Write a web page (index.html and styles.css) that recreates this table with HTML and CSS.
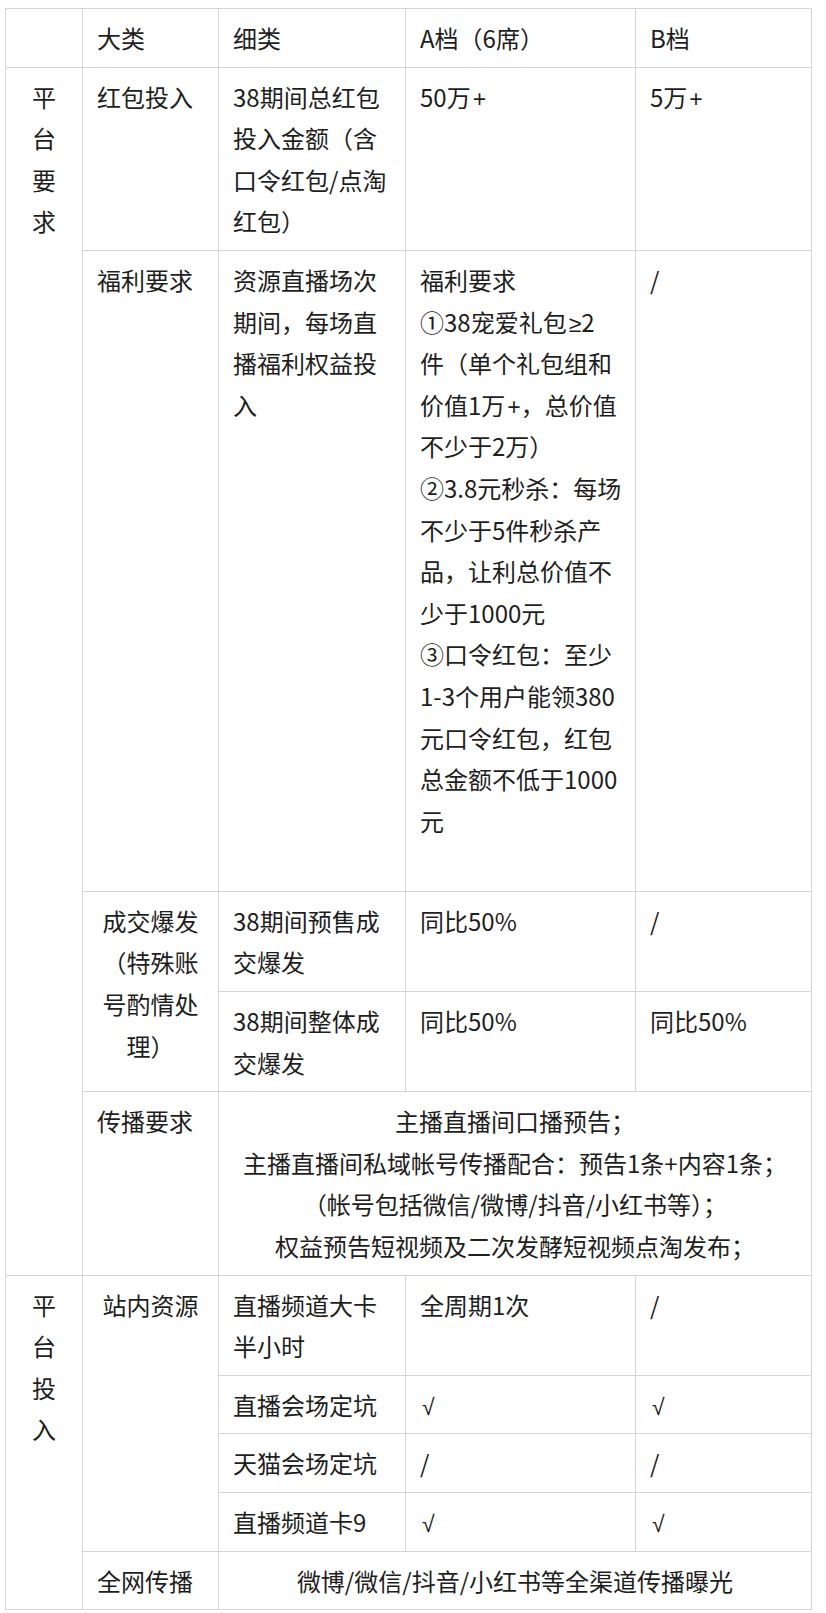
FILE: index.html
```html
<!DOCTYPE html>
<html lang="zh-CN">
<head>
<meta charset="utf-8">
<title>38 资源档位</title>
<link rel="stylesheet" href="styles.css">
</head>
<body>
<div class="page">
<table class="plan">
  <colgroup>
    <col class="c1"><col class="c2"><col class="c3"><col class="c4"><col class="c5">
  </colgroup>
  <tbody>
    <tr>
      <td></td>
      <td>大类</td>
      <td>细类</td>
      <td>A档（6席）</td>
      <td>B档</td>
    </tr>
    <tr>
      <td rowspan="5" class="vert">平<br>台<br>要<br>求</td>
      <td>红包投入</td>
      <td>38期间总红包投入金额（含口令红包/点淘红包）</td>
      <td>50万<span class="sym">+</span></td>
      <td>5万<span class="sym">+</span></td>
    </tr>
    <tr>
      <td>福利要求</td>
      <td>资源直播场次期间，每场直播福利权益投入</td>
      <td class="wide">福利要求<br>①38宠爱礼包<span class="sym">≥</span>2<br>件（单个礼包组和<br>价值1万<span class="sym">+</span>，总价值<br>不少于2万）<br>②3.8元秒杀：每场<br>不少于5件秒杀产<br>品，让利总价值不<br>少于1000元<br>③口令红包：至少<br>1-3个用户能领380<br>元口令红包，红包<br>总金额不低于1000<br>元<br>&nbsp;</td>
      <td>/</td>
    </tr>
    <tr>
      <td rowspan="2" class="center">成交爆发（特殊账号酌情处理）</td>
      <td>38期间预售成交爆发</td>
      <td>同比50%</td>
      <td>/</td>
    </tr>
    <tr>
      <td>38期间整体成交爆发</td>
      <td>同比50%</td>
      <td>同比50%</td>
    </tr>
    <tr>
      <td>传播要求</td>
      <td colspan="3" class="center">主播直播间口播预告；<br>主播直播间私域帐号传播配合：预告1条+内容1条；<br>（帐号包括微信/微博/抖音/小红书等）；<br>权益预告短视频及二次发酵短视频点淘发布；</td>
    </tr>
    <tr>
      <td rowspan="5" class="vert">平<br>台<br>投<br>入</td>
      <td rowspan="4" class="center">站内资源</td>
      <td>直播频道大卡半小时</td>
      <td>全周期1次</td>
      <td>/</td>
    </tr>
    <tr>
      <td>直播会场定坑</td>
      <td><span class="sym">√</span></td>
      <td><span class="sym">√</span></td>
    </tr>
    <tr>
      <td>天猫会场定坑</td>
      <td>/</td>
      <td>/</td>
    </tr>
    <tr>
      <td>直播频道卡9</td>
      <td><span class="sym">√</span></td>
      <td><span class="sym">√</span></td>
    </tr>
    <tr>
      <td>全网传播</td>
      <td colspan="3" class="center">微博/微信/抖音/小红书等全渠道传播曝光</td>
    </tr>
  </tbody>
</table>
</div>
</body>
</html>
```

FILE: styles.css
```css
html, body {
  margin: 0;
  padding: 0;
  background: #ffffff;
}

.page {
  padding: 8px 0 0 5px;
}

.plan {
  border-collapse: collapse;
  table-layout: fixed;
  width: 806px;
  font-family: "Noto Sans CJK SC", "Noto Sans", sans-serif;
  font-size: 24px;
  line-height: 41.6px;
  color: #1e1e1e;
}

.plan .c1 { width: 77px; }
.plan .c2 { width: 136px; }
.plan .c3 { width: 187px; }
.plan .c4 { width: 230px; }
.plan .c5 { width: 176px; }

.plan td {
  border: 1px solid #d6d6d6;
  padding: 8px 14px 8px 14px;
  vertical-align: top;
  text-align: left;
  word-break: break-all;
}

.plan td.wide {
  padding-right: 8px;
}

.plan td.center {
  text-align: center;
}

.plan td.vert {
  text-align: center;
  padding-left: 4px;
  padding-right: 4px;
}

.sym {
  font-family: "Liberation Sans", "DejaVu Sans", sans-serif;
  font-size: 23px;
  line-height: 1;
  margin-left: 2px;
}
```
